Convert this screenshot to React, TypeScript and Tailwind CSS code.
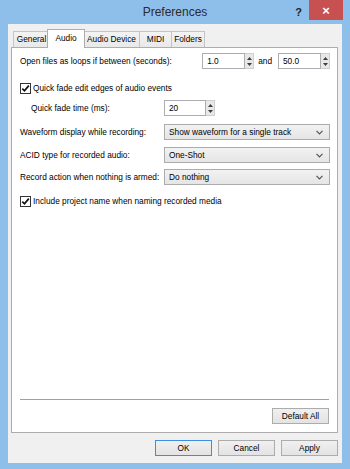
const Tri = ({ up }: { up?: boolean }) => (
  <svg width="5" height="3" viewBox="0 0 5 3">
    <path d={up ? "M0 3 L2.5 0 L5 3 Z" : "M0 0 L2.5 3 L5 0 Z"} fill="#3c3c3c" />
  </svg>
)

const Spin = ({ value, className }: { value: string; className: string }) => (
  <div className="flex h-[16px]">
    <div className={`${className} flex items-center border border-[#abadb3] bg-white pl-[4px]`}>
      {value}
    </div>
    <div className="flex w-[9px] flex-col items-center justify-center gap-[3px] border border-l-0 border-[#cfcfcf] bg-[#e8e8e8]">
      <Tri up />
      <Tri />
    </div>
  </div>
)

const Select = ({ value }: { value: string }) => (
  <div className="flex h-[16px] flex-1 items-center border border-[#acacac] bg-linear-to-b from-[#f2f2f2] to-[#e5e5e5] pl-[4px] pr-[6px]">
    <span className="flex-1">{value}</span>
    <svg width="7" height="5" viewBox="0 0 7 5">
      <path d="M0.5 0.8 L3.5 3.8 L6.5 0.8" stroke="#555" strokeWidth="1.2" fill="none" />
    </svg>
  </div>
)

const Check = () => (
  <div className="flex h-[11px] w-[11px] items-center justify-center border border-[#333] bg-white">
    <svg width="9" height="9" viewBox="0 0 9 9">
      <path d="M1.3 4.6 L3.5 6.8 L7.8 1.6" stroke="#111" strokeWidth="1.7" fill="none" />
    </svg>
  </div>
)

const Button = ({ label, primary }: { label: string; primary?: boolean }) => (
  <div
    className={`flex h-[16px] w-[57px] items-center justify-center border bg-linear-to-b from-[#f0f0f0] to-[#e3e3e3] ${
      primary ? "border-[#3c8fe0]" : "border-[#acacac]"
    }`}
  >
    {label}
  </div>
)

const tabs = [
  { name: "General", w: "w-[37px]" },
  { name: "Audio", w: "w-[38px]", active: true },
  { name: "Audio Device", w: "w-[57px]" },
  { name: "MIDI", w: "w-[33px]" },
  { name: "Folders", w: "w-[34px]" },
]

const App = () => {
  return (
    <div className="flex h-[469px] w-[350px] flex-col bg-[#8ebfeb] font-['Liberation_Sans',Arial,sans-serif] text-[8.3px] text-black">
      {/* title bar */}
      <div className="relative h-[24px]">
        <div className="pt-[4px] text-center text-[12px] leading-[16px] text-[#2b2b2b]">Preferences</div>
        <div className="absolute right-[48px] top-[4px] text-[11px] font-bold text-[#222]">?</div>
        <div className="absolute right-[7px] top-0 flex h-[20px] w-[34px] items-center justify-center bg-[#c75050] text-[13px] font-bold leading-none text-white">
          ×
        </div>
      </div>

      {/* client */}
      <div className="mx-[8px] mb-[6px] flex flex-1 flex-col bg-[#f0f0f0] pl-[3px] pr-[4px] pt-[5px]">
        <div className="flex h-[18px] items-end pl-[2px]">
          {tabs.map((t) =>
            t.active ? (
              <div
                key={t.name}
                className={`${t.w} relative z-10 -mx-[2px] -mb-px flex h-[19px] items-center justify-center border border-b-0 border-[#adadad] bg-white pb-[2px]`}
              >
                {t.name}
              </div>
            ) : (
              <div
                key={t.name}
                className={`${t.w} -mr-px flex h-[16px] items-center justify-center border border-b-0 border-[#c4c4c4] bg-linear-to-b from-[#f3f3f3] to-[#e9e9e9]`}
              >
                {t.name}
              </div>
            )
          )}
        </div>

        <div className="flex flex-1 flex-col border border-[#adadad] bg-white pb-[8px] pl-[8px] pr-[7px] pt-[5px]">
          <div className="flex h-[16px] items-center">
            <span>Open files as loops if between (seconds):</span>
            <div className="ml-auto flex items-center">
              <Spin value="1.0" className="w-[43px]" />
              <span className="ml-[4px] mr-[6px]">and</span>
              <Spin value="50.0" className="w-[43px]" />
            </div>
          </div>

          <div className="mt-[13px] flex h-[13px] items-center gap-[2px]">
            <Check />
            <span>Quick fade edit edges of audio events</span>
          </div>

          <div className="mt-[5px] flex h-[16px] items-center">
            <span className="w-[144px] pl-[11px]">Quick fade time (ms):</span>
            <Spin value="20" className="w-[42px]" />
          </div>

          <div className="mt-[8px] flex h-[16px] items-center">
            <span className="w-[144px]">Waveform display while recording:</span>
            <Select value="Show waveform for a single track" />
          </div>
          <div className="mt-[7px] flex h-[16px] items-center">
            <span className="w-[144px]">ACID type for recorded audio:</span>
            <Select value="One-Shot" />
          </div>
          <div className="mt-[6px] flex h-[16px] items-center">
            <span className="w-[144px]">Record action when nothing is armed:</span>
            <Select value="Do nothing" />
          </div>

          <div className="mt-[10px] flex h-[13px] items-center gap-[2px]">
            <Check />
            <span>Include project name when naming recorded media</span>
          </div>

          <div className="flex-1" />
          <div className="mr-[1px] h-px bg-[#a0a0a0]" />
          <div className="mr-[1px] mt-[8px] flex justify-end">
            <Button label="Default All" />
          </div>
        </div>

        <div className="mb-[7px] mt-[7px] flex justify-end gap-[6px]">
          <Button label="OK" primary />
          <Button label="Cancel" />
          <Button label="Apply" />
        </div>
      </div>
    </div>
  )
}

export default App
